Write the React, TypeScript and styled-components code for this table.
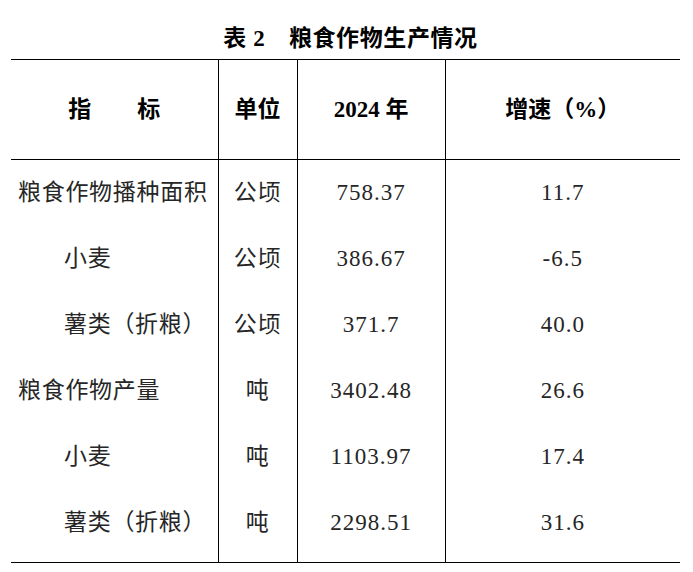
import React from "react";
import styled, { createGlobalStyle } from "styled-components";

const GlobalStyle = createGlobalStyle`
  html, body {
    margin: 0;
    padding: 0;
    background: #ffffff;
  }
  body {
    font-family: "Liberation Serif", "Noto Sans CJK SC", serif;
    color: #1c1c1c;
  }
`;

const Page = styled.div`
  padding: 0 13px 0 11px;
`;

const Title = styled.h1`
  margin: 0;
  padding: 24px 0 5px 10px;
  font-family: "Liberation Serif", "Noto Sans CJK SC", serif;
  font-size: 23px;
  line-height: 30px;
  font-weight: 700;
  letter-spacing: 0.6px;
  text-align: center;
  color: #000;
`;

const Table = styled.table`
  width: 100%;
  border-collapse: collapse;
  table-layout: fixed;
  border-top: 1px solid #000;
  border-bottom: 1px solid #000;
`;

const Col = styled.col<{ $w: number }>`
  width: ${(p) => p.$w}px;
`;

const HeadCell = styled.th`
  height: 99px;
  padding: 0;
  border-bottom: 1px solid #000;
  font-family: "Liberation Serif", "Noto Sans CJK SC", serif;
  font-size: 23px;
  font-weight: 700;
  line-height: 30px;
  color: #000;
  text-align: center;
  vertical-align: middle;
  & + & {
    border-left: 1px solid #000;
  }
`;

const Row = styled.tr`
  &:last-child td {
    padding-bottom: 6px;
  }
`;

const Cell = styled.td<{ $indent?: boolean; $num?: boolean; $left?: boolean }>`
  height: 66px;
  padding: 0 0 0 ${(p) => (p.$left ? (p.$indent ? 53 : 7) : 0)}px;
  font-family: "Liberation Serif", "Noto Sans CJK SC", serif;
  font-size: 23px;
  font-weight: 400;
  line-height: 30px;
  letter-spacing: ${(p) => (p.$num ? 1 : 0.7)}px;
  color: #262626;
  text-align: ${(p) => (p.$left ? "left" : "center")};
  vertical-align: middle;
  white-space: nowrap;
  & + & {
    border-left: 1px solid #000;
  }
`;

type Item = {
  name: string;
  indent: boolean;
  unit: string;
  value: string;
  growth: string;
};

const rows: Item[] = [
  { name: "粮食作物播种面积", indent: false, unit: "公顷", value: "758.37", growth: "11.7" },
  { name: "小麦", indent: true, unit: "公顷", value: "386.67", growth: "-6.5" },
  { name: "薯类（折粮）", indent: true, unit: "公顷", value: "371.7", growth: "40.0" },
  { name: "粮食作物产量", indent: false, unit: "吨", value: "3402.48", growth: "26.6" },
  { name: "小麦", indent: true, unit: "吨", value: "1103.97", growth: "17.4" },
  { name: "薯类（折粮）", indent: true, unit: "吨", value: "2298.51", growth: "31.6" },
];

export default function App() {
  return (
    <>
      <GlobalStyle />
      <Page>
        <Title>表 2　粮食作物生产情况</Title>
        <Table>
          <colgroup>
            <Col $w={207} />
            <Col $w={79} />
            <Col $w={148} />
            <Col $w={235} />
          </colgroup>
          <thead>
            <tr>
              <HeadCell>指　　标</HeadCell>
              <HeadCell>单位</HeadCell>
              <HeadCell>2024 年</HeadCell>
              <HeadCell>增速（%）</HeadCell>
            </tr>
          </thead>
          <tbody>
            {rows.map((r, i) => (
              <Row key={i}>
                <Cell $left $indent={r.indent}>{r.name}</Cell>
                <Cell>{r.unit}</Cell>
                <Cell $num>{r.value}</Cell>
                <Cell $num>{r.growth}</Cell>
              </Row>
            ))}
          </tbody>
        </Table>
      </Page>
    </>
  );
}
